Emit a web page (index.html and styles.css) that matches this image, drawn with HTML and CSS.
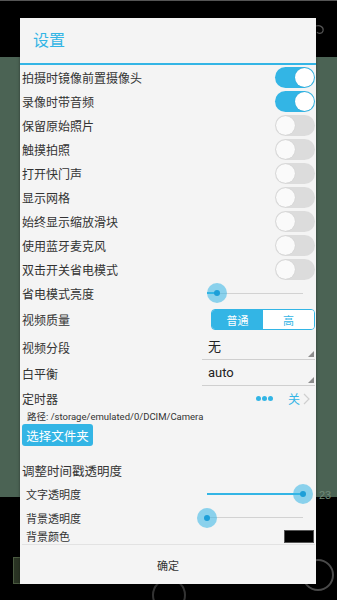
FILE: index.html
```html
<!DOCTYPE html>
<html lang="zh">
<head>
<meta charset="utf-8">
<link rel="stylesheet" href="styles.css">
</head>
<body>
<div class="screen">
  <div class="bg-top"></div>
  <div class="bg-mid"></div>
  <div class="bg-bottom"></div>

  <svg class="deco deco-curl" width="14" height="12" viewBox="0 0 14 12"><path d="M2 2 C6 1 10 3 9 7 C8 10 4 10 3 8" fill="none" stroke="#555" stroke-width="1.2"/></svg>
  <div class="deco deco-num">23</div>
  <div class="deco deco-thumb"></div>
  <div class="deco deco-circle-c"></div>
  <div class="deco deco-circle-r"></div>

  <div class="dialog">
    <div class="dlg-head">设置</div>
    <div class="dlg-line"></div>
    <div class="dlg-body">
      <div class="row"><span>拍摄时镜像前置摄像头</span><span class="toggle on"><i></i></span></div>
      <div class="row"><span>录像时带音频</span><span class="toggle on"><i></i></span></div>
      <div class="row"><span>保留原始照片</span><span class="toggle"><i></i></span></div>
      <div class="row"><span>触摸拍照</span><span class="toggle"><i></i></span></div>
      <div class="row"><span>打开快门声</span><span class="toggle"><i></i></span></div>
      <div class="row"><span>显示网格</span><span class="toggle"><i></i></span></div>
      <div class="row"><span>始终显示缩放滑块</span><span class="toggle"><i></i></span></div>
      <div class="row"><span>使用蓝牙麦克风</span><span class="toggle"><i></i></span></div>
      <div class="row"><span>双击开关省电模式</span><span class="toggle"><i></i></span></div>

      <div class="row"><span>省电模式亮度</span>
        <span class="slider"><span class="track"></span><span class="fill" style="width:10px"></span><span class="knob" style="left:10px"></span></span>
      </div>
      <div class="row row-seg"><span>视频质量</span>
        <span class="seg"><span class="seg-a">普通</span><span class="seg-b">高</span></span>
      </div>
      <div class="row row-spin"><span>视频分段</span>
        <span class="spin"><span class="spin-val">无</span><span class="spin-tri"></span></span>
      </div>
      <div class="row row-spin"><span>白平衡</span>
        <span class="spin"><span class="spin-val">auto</span><span class="spin-tri"></span></span>
      </div>
      <div class="row row-timer"><span>定时器</span>
        <span class="timer"><span class="dots"><b></b><b></b><b></b></span><span class="off">关</span>
          <svg class="chev" width="7" height="12" viewBox="0 0 7 12"><path d="M1 1 L6 6 L1 11" fill="none" stroke="#cfcfcf" stroke-width="1.2"/></svg>
        </span>
      </div>
      <div class="path">路径: /storage/emulated/0/DCIM/Camera</div>
      <div class="btn-wrap"><span class="btn">选择文件夹</span></div>

      <div class="section">调整时间戳透明度</div>
      <div class="row row-sub"><span>文字透明度</span>
        <span class="slider"><span class="track"></span><span class="fill" style="width:96px"></span><span class="knob" style="left:96px"></span></span>
      </div>
      <div class="row row-sub row-sub2"><span>背景透明度</span>
        <span class="slider"><span class="track"></span><span class="fill" style="width:0px"></span><span class="knob" style="left:0px"></span></span>
      </div>
      <div class="row row-sub row-color"><span>背景颜色</span><span class="swatch"></span></div>
    </div>
    <div class="dlg-foot">确定</div>
  </div>
</div>
</body>
</html>
```

FILE: styles.css
```css
* { box-sizing: border-box; margin: 0; padding: 0; }
html, body { width: 337px; height: 600px; overflow: hidden; }
body { font-family: Roboto, "Noto Sans CJK SC", sans-serif; background: #000; }

.screen { position: relative; width: 337px; height: 600px; display: flex; flex-direction: column; }
.bg-top { height: 57px; background: #000; border-top: 1px solid #555; }
.bg-mid { height: 440px; background: #4b6354; }
.bg-bottom { flex: 1; background: #000; }

.deco { position: absolute; }
.deco-curl { left: 314px; top: 24px; }
.deco-num { left: 319px; top: 489px; font-size: 11px; color: #6f8a78; font-family: "Liberation Sans", sans-serif; }
.deco-thumb { left: 13px; top: 557px; width: 30px; height: 27px; border: 1px solid #4a5a40; background: #2a3424; }
.deco-circle-c { left: 152px; top: 578px; width: 34px; height: 34px; border-radius: 50%; border: 2px solid #333; }
.deco-circle-r { left: 302px; top: 559px; width: 32px; height: 32px; border-radius: 50%; border: 2px solid #4a4a4a; }

.dialog {
  position: absolute; left: 20px; top: 18px; width: 296px; height: 566px;
  background: #f4f4f4; display: flex; flex-direction: column;
  box-shadow: 0 1px 3px rgba(0,0,0,.4);
}
.dlg-head { height: 45px; padding-left: 13px; padding-bottom: 3px; display: flex; align-items: center; font-size: 16px; color: #33b5e5; }
.dlg-line { height: 2px; background: #33b5e5; }
.dlg-body { padding: 0 1px 0 2px; display: flex; flex-direction: column; }

.row { height: 24px; display: flex; align-items: center; justify-content: space-between; font-size: 12px; color: #333; }

.toggle { width: 40px; height: 21px; border-radius: 11px; background: #dcdcdc; position: relative; display: block; }
.toggle i { position: absolute; top: 1px; left: 1px; width: 19px; height: 19px; border-radius: 50%; background: #fafafa; box-shadow: 0 0 1px rgba(0,0,0,.15); }
.toggle.on { background: #33b5e5; }
.toggle.on i { left: 20px; background: #fff; }

.slider { position: relative; width: 96px; height: 22px; margin-right: 12px; display: block; }
.slider .track { position: absolute; left: 0; right: 0; top: 10.5px; height: 1px; background: #d2d2d2; }
.slider .fill { position: absolute; left: 0; top: 10px; height: 2px; background: #33b5e5; }
.slider .knob { position: absolute; top: 1px; width: 20px; height: 20px; margin-left: -10px; border-radius: 50%; background: rgba(51,181,229,.55); }
.slider .knob::after { content: ""; position: absolute; left: 7px; top: 7px; width: 6px; height: 6px; border-radius: 50%; background: #1e9fd8; }

.row-seg { height: 29px; }
.seg { display: flex; width: 104px; height: 21px; border: 1px solid #33b5e5; border-radius: 4px; overflow: hidden; font-size: 11px; }
.seg-a { flex: 1; background: #33b5e5; color: #fff; display: flex; align-items: center; justify-content: center; }
.seg-b { flex: 1; background: #fff; color: #33b5e5; display: flex; align-items: center; justify-content: center; }

.row-spin { height: 26px; }
.spin { position: relative; width: 113px; height: 22px; margin-top: 4px; border-bottom: 1px solid #cfcfcf; display: flex; align-items: flex-start; padding-left: 6px; font-size: 13px; color: #222; line-height: 17px; }
.spin-tri { position: absolute; right: 1px; bottom: 2px; width: 0; height: 0; border-left: 6px solid transparent; border-bottom: 6px solid #8c8c8c; }

.row-timer { height: 25px; font-size: 12px; }
.timer { display: flex; align-items: center; margin-right: 5px; }
.dots { display: flex; gap: 1px; margin-right: 15px; }
.dots b { width: 5px; height: 5px; border-radius: 50%; background: #33b5e5; display: block; }
.off { color: #33b5e5; font-size: 12px; margin-right: 3px; }
.chev { display: block; }

.path { padding-left: 5px; font-size: 9.5px; color: #333; height: 12px; line-height: 12px; }
.btn-wrap { padding-top: 1px; }
.btn { display: inline-flex; align-items: center; justify-content: center; width: 71px; height: 22px; background: #33b5e5; color: #fff; font-size: 12.5px; border-radius: 3px; }

.section { margin-top: 12px; height: 24px; display: flex; align-items: center; font-size: 12.5px; color: #333; }
.row-sub { padding-left: 4px; font-size: 11px; height: 23px; }
.row-sub2 { height: 25px; }
.row-color { height: 15px; border-bottom: 1px solid #e2e2e2; align-items: flex-end; }
.swatch { width: 30px; height: 13px; background: #000; border: 1px solid #555; margin-right: 1px; margin-bottom: 1px; }

.dlg-foot { flex: 1; display: flex; align-items: center; justify-content: center; font-size: 11px; color: #333; }
```
